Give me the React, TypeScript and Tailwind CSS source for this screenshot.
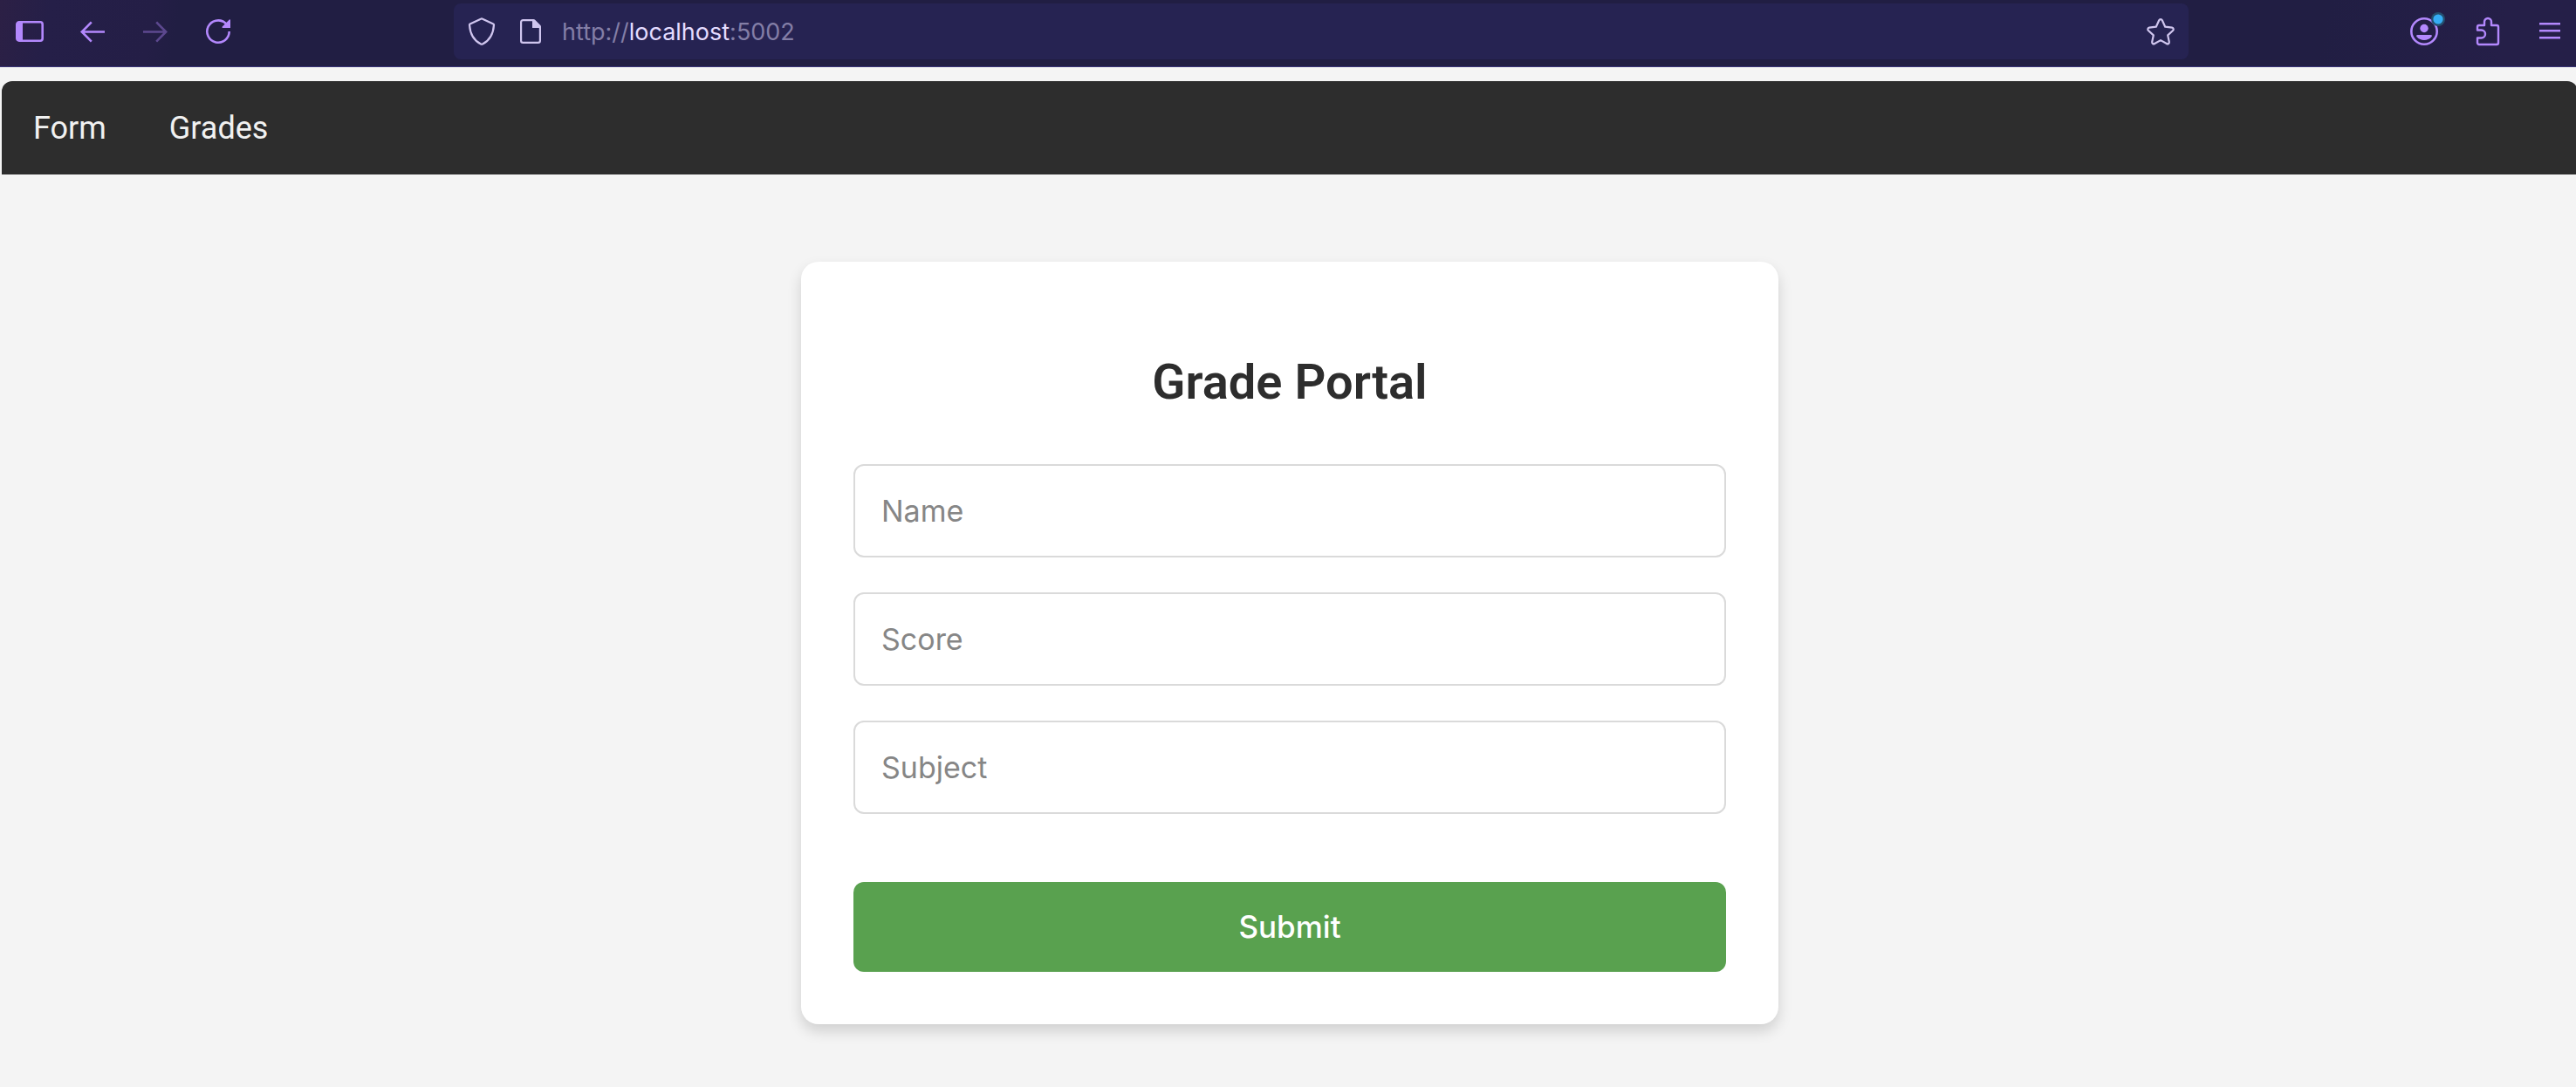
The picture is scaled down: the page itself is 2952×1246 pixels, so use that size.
import React from "react";

const FIELDS = [
  { id: "name", label: "Name" },
  { id: "score", label: "Score" },
  { id: "subject", label: "Subject" },
];

function Icon({ children }: { children: React.ReactNode }) {
  return (
    <svg
      viewBox="0 0 32 32"
      className="block size-8 overflow-visible"
      fill="none"
      stroke="currentColor"
      strokeWidth="2.6"
      aria-hidden="true"
    >
      {children}
    </svg>
  );
}

function IconButton({ label, children, disabled }: { label: string; children: React.ReactNode; disabled?: boolean }) {
  return (
    <button type="button" aria-label={label} disabled={disabled} className="shrink-0 disabled:opacity-40">
      <Icon>{children}</Icon>
    </button>
  );
}

function BrowserToolbar() {
  return (
    <header className="flex items-center border-b border-[#3a3478] bg-[linear-gradient(100deg,#2c2045_0%,#251f48_2%,#241e46_6%,#211e43_7%,#211e43_90%,#251f48_97%,#251f48_100%)] pt-1 pb-2 text-[#b388fd]">
      <div className="flex w-[520px] shrink-0 items-center gap-10 pl-[18px]">
        <IconButton label="Toggle sidebar">
          <rect x="1.3" y="5.3" width="29.4" height="21.4" rx="2.6" />
          <path d="M2 6h6v20H2z" fill="currentColor" stroke="none" />
        </IconButton>
        <IconButton label="Back">
          <path d="M30 16.5H4M14.8 5.3 3.8 16.5l11 11.2" />
        </IconButton>
        <IconButton label="Forward" disabled>
          <path d="M2 16.5h26M17.2 5.3l11 11.2-11 11.2" />
        </IconButton>
        <IconButton label="Reload">
          <path d="M28.7 16A12.7 12.7 0 1 1 24 6.2l1.5 1.4" />
          <path d="M30 3v9h-8.600c-.9 0-1.200-1-.6-1.600l8-8c.5-.5 1.200-.1 1.200.6z" fill="currentColor" stroke="none" />
        </IconButton>
      </div>

      <div className="flex h-16 min-w-0 flex-1 items-center rounded-lg bg-[#262352] px-4 text-[#cfc5ee]">
        <div className="flex items-center gap-6">
          <IconButton label="Site protections">
            <path
              d="M17 1.700 29.400 7.600c.5.2.6.6.6 1C29.300 18.500 25.500 26.200 17 30.500c-.6.300-1.300.300-1.900 0C6.500 26.200 2.700 18.500 2 8.600c0-.5.200-.8.600-1L15 1.700c.6-.4 1.400-.4 2 0z"
              strokeWidth="2.200"
              strokeLinejoin="round"
            />
          </IconButton>
          <IconButton label="Site information">
            <path d="M19 3.100H7.300a2.200 2.200 0 0 0-2.200 2.200v21.400a2.200 2.200 0 0 0 2.200 2.200h17.400a2.200 2.200 0 0 0 2.200-2.200V11" strokeWidth="2.200" />
            <path d="M18 2h1.500c.6 0 1 .2 1.400.6l6.500 6.500c.400.400.600.900.600 1.400V12h-9.500a.5.5 0 0 1-.5-.5z" fill="currentColor" stroke="none" />
          </IconButton>
        </div>
        <div className="ml-5 min-w-0 flex-1 truncate pt-0.5 font-['Inter',sans-serif] text-[27px] leading-8 text-[#837ea6]">
          http://<span className="text-[#e4dcff]">localhost</span>:5002
        </div>
        <IconButton label="Bookmark this page">
          <path
            d="M14.200 3.200a2 2 0 0 1 3.600 0l3.400 7.500 7.900 1a1.900 1.900 0 0 1 1 3.300l-5.900 5.400 1.600 7.600a1.900 1.900 0 0 1-2.900 2L16 26.100 9.100 30a1.900 1.900 0 0 1-2.900-2l1.600-7.600L1.900 15a1.900 1.900 0 0 1 1-3.300l7.900-1z"
            strokeWidth="2.200"
            strokeLinejoin="round"
          />
        </IconButton>
      </div>

      <div className="flex w-[444px] shrink-0 items-center justify-end gap-10 pr-3.5">
        <IconButton label="Account">
          <circle cx="16" cy="16" r="14.700" />
          <circle cx="16" cy="12.500" r="4.700" fill="currentColor" stroke="none" />
          <path d="M8.500 20h15c1.600 0 1.800 1.200.9 2.200a11.200 11.200 0 0 1-16.800 0c-.9-1-.7-2.200.9-2.200z" fill="currentColor" stroke="none" />
          <circle cx="32" cy="2" r="8" fill="#25506f" stroke="none" />
          <circle cx="32" cy="2" r="5.600" fill="#35adf5" stroke="none" />
        </IconButton>
        <IconButton label="Extensions">
          <path
            d="M5 14.500V11a2 2 0 0 1 2-2h6V5a4 4 0 0 1 8 0v4h6a2 2 0 0 1 2 2v18a2 2 0 0 1-2 2H7a2 2 0 0 1-2-2v-5.500h4.500a4.500 4.500 0 0 0 0-9z"
            strokeWidth="2.400"
            strokeLinejoin="round"
          />
        </IconButton>
        <IconButton label="Menu">
          <path d="M4 7.200h24M4 15.200h24M4 23.200h24" strokeWidth="2.400" />
        </IconButton>
      </div>
    </header>
  );
}

export default function App() {
  return (
    <div className="min-h-screen overflow-x-hidden bg-[#f4f4f4] font-['Roboto',sans-serif]">
      <BrowserToolbar />
      <div className="mt-4 -mr-0.5 ml-0.5">
        <nav className="flex gap-[72px] rounded-t-xl bg-[#2d2d2d] px-9 pt-[33px] pb-8 text-[36px] leading-[42px] text-[#f1f1f1]">
          <a href="#form">Form</a>
          <a href="#grades">Grades</a>
        </nav>

        <main className="px-10 pt-[100px] pb-[72px]">
          <form
            id="form"
            className="mx-auto max-w-[1120px] rounded-[20px] bg-white p-[60px] shadow-[0_8px_16px_rgba(0,0,0,0.15)]"
            onSubmit={(e) => e.preventDefault()}
          >
            <h1 className="mt-[46px] mb-[62px] text-center text-[56px] leading-[64px] font-semibold text-[#2d2d2d]">
              Grade Portal
            </h1>
            <div className="flex flex-col gap-10">
              {FIELDS.map((field) => (
                <input
                  key={field.id}
                  name={field.id}
                  type="text"
                  aria-label={field.label}
                  placeholder={field.label}
                  className="block h-[107px] w-full rounded-xl border-2 border-[#dadada] bg-white px-[30px] font-['Inter',sans-serif] text-[34px] text-[#2d2d2d] placeholder:text-[#868686]"
                />
              ))}
            </div>
            <button
              type="submit"
              className="mt-[78px] block h-[103px] w-full rounded-xl bg-[#59a14f] font-['Inter',sans-serif] text-[35px] font-medium text-white"
            >
              Submit
            </button>
          </form>
        </main>
      </div>
    </div>
  );
}
